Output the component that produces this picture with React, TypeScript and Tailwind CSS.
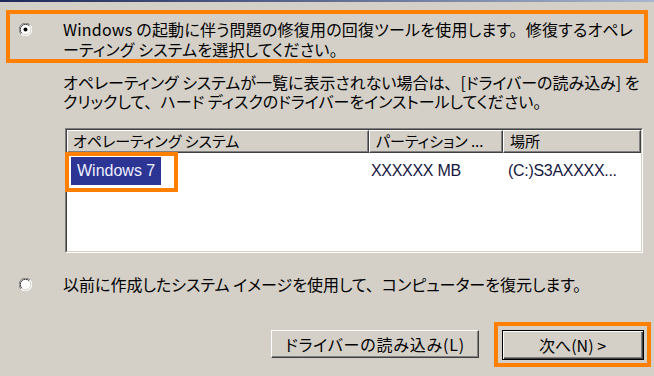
import React from "react";

const jp = "font-['Noto_Sans_CJK_JP',sans-serif] [font-feature-settings:'palt']";

function Radio({ checked }: { checked?: boolean }) {
  return (
    <svg width="13" height="13" viewBox="0 0 13 13" className="shrink-0">
      <circle cx="6.5" cy="6.5" r="6" fill="#fff" />
      <path d="M11 2 A6 6 0 0 0 2 11" stroke="#808080" strokeWidth="1" fill="none" />
      <path d="M10.2 2.8 A5 5 0 0 0 2.8 10.2" stroke="#404040" strokeWidth="1" fill="none" />
      <path d="M2 11 A6 6 0 0 0 11 2" stroke="#ffffff" strokeWidth="1" fill="none" />
      <path d="M2.8 10.2 A5 5 0 0 0 10.2 2.8" stroke="#d4d0c8" strokeWidth="1" fill="none" />
      {checked && <circle cx="6.5" cy="6.5" r="2" fill="#000" />}
    </svg>
  );
}

const headerCell =
  "h-full flex items-center border-t border-l border-t-white border-l-white border-r border-b border-r-[#404040] border-b-[#404040] shadow-[inset_-1px_-1px_0_#808080] bg-[#d4d0c8] text-[15px] text-black";

// en space after palt punctuation keeps the wide full-width look
const sp = "\u2002";

export default function App() {
  return (
    <div className={`w-[654px] h-[376px] bg-[#d4d0c8] overflow-hidden flex flex-col text-black ${jp}`}>
      <div className="h-[2px] bg-gradient-to-r from-[#1c2a58] to-[#a9b6cc]" />

      {/* option 1 */}
      <div className="mt-[8px] mx-[6px] h-[53px] border-4 border-[#ff8000] flex">
        <div className="ml-[9px] mt-[9px]">
          <Radio checked />
        </div>
        <div className="ml-[31px] pt-[5px] text-[16px] leading-[20px] whitespace-nowrap tracking-[0.2px]">
          {`Windows の起動に伴う問題の修復用の回復ツールを使用します。${sp}修復するオペレ`}
          <br />
          ーティング システムを選択してください。
        </div>
      </div>

      <div className="ml-[63px] mt-[10px] text-[16px] leading-[19px] whitespace-nowrap">
        {`オペレーティング システムが一覧に表示されない場合は、${sp}[ドライバーの読み込み] を`}
        <br />
        {`クリックして、${sp}ハード ディスクのドライバーをインストールしてください。`}
      </div>

      {/* list view */}
      <div className="relative ml-[65px] mt-[17px] w-[578px] h-[125px] flex border border-t-[#808080] border-l-[#808080] border-b-white border-r-white">
        <div className="flex-1 flex flex-col border border-t-[#404040] border-l-[#404040] border-b-[#d4d0c8] border-r-[#d4d0c8] bg-white">
          <div className="h-[23px] flex">
            <div className={`${headerCell} w-[302px] pl-[5px]`}>オペレーティング システム</div>
            <div className={`${headerCell} w-[134px] pl-[6px]`}>パーティション ...</div>
            <div className={`${headerCell} flex-1 pl-[6px]`}>場所</div>
          </div>
          <div className="mt-[4px] h-[28px] flex items-center font-['Liberation_Sans',Arial,sans-serif] text-[16px] text-[#15183f]">
            <div className="w-[302px] pl-[4px]">
              <span className="h-[28px] px-[6px] flex items-center w-fit bg-[#2c3494] text-[#eef0ff]">Windows 7</span>
            </div>
            <div className="w-[134px] pl-[2px] tracking-[-0.3px]">XXXXXX MB</div>
            <div className="flex-1 pl-[5px] tracking-[-0.3px]">(C:)S3AXXXX...</div>
          </div>
        </div>
        <div className="absolute left-[-1px] top-[23px] w-[113px] h-[40px] border-4 border-[#ff8000]" />
      </div>

      {/* option 2 */}
      <div className="mt-[21px] h-[20px] flex items-center">
        <div className="ml-[19px]">
          <Radio />
        </div>
        <div className="ml-[31px] text-[16px] leading-[20px] whitespace-nowrap">
          {`以前に作成したシステム イメージを使用して、${sp}コンピューターを復元します。`}
        </div>
      </div>

      {/* buttons */}
      <div className="mt-[28px] flex justify-end items-start pr-[3px]">
        <button className="mt-[8px] mr-[15px] w-[208px] h-[28px] flex items-center justify-center text-[16px] tracking-[0.8px] bg-[#d4d0c8] border border-t-white border-l-white border-r-[#404040] border-b-[#404040] shadow-[inset_-1px_-1px_0_#808080]">
          ドライバーの読み込み(L)
        </button>
        <div className="w-[157px] h-[45px] border-4 border-[#ff8000] flex items-center justify-center">
          <button className="w-[142px] h-[30px] flex items-center justify-center text-[16px] bg-[#d4d0c8] border border-black shadow-[inset_1px_1px_0_#fff,inset_-1px_-1px_0_#404040,inset_-2px_-2px_0_#808080]">
            次へ(N) &gt;
          </button>
        </div>
      </div>
    </div>
  );
}
